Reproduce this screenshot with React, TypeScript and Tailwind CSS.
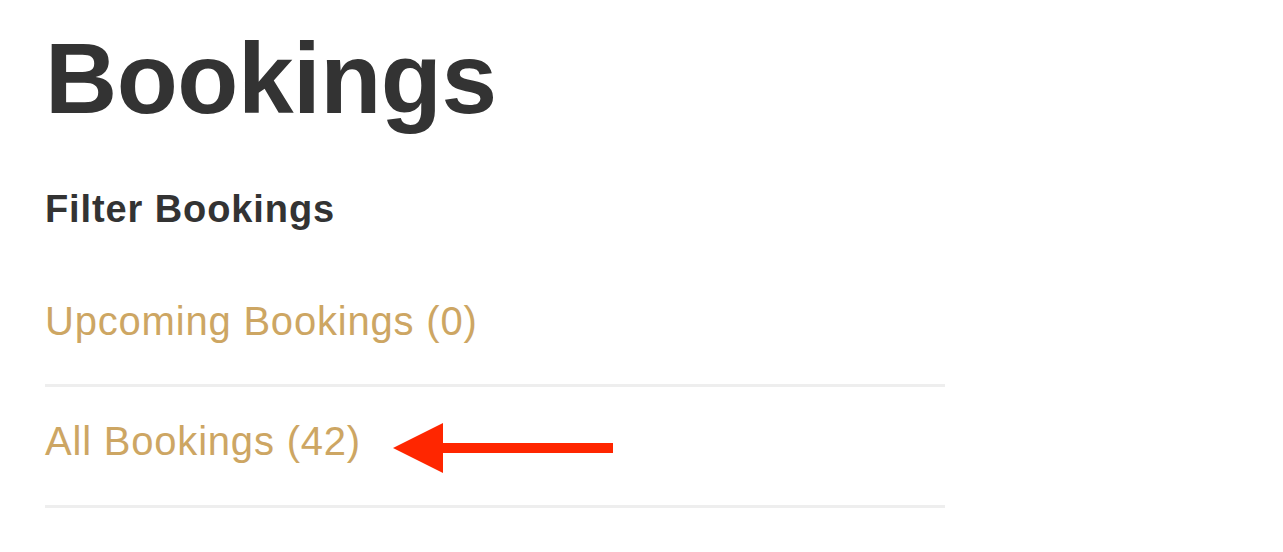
import React from "react";

export default function App() {
  return (
    <div className="relative min-h-screen bg-white font-['Liberation_Sans',Arial,sans-serif] text-[#333333]">
      <div className="pl-[45px]">
        <h1 className="pt-[28px] text-[100px] leading-[100px] font-bold tracking-[-0.5px]">Bookings</h1>
        <h3 className="mt-[61.5px] text-[38px] leading-[38px] font-bold tracking-[0.9px]">Filter Bookings</h3>
        <ul className="mt-[39px] w-[900px]">
          <li className="border-b-[3px] border-[#eeeeee] pt-[34px] pb-[43.5px]">
            <a className="block text-[40px] leading-[40px] tracking-[0.8px] text-[#cda663]">Upcoming Bookings (0)</a>
          </li>
          <li className="border-b-[3px] border-[#eeeeee] pt-[34px] pb-[43.5px]">
            <a className="block text-[40px] leading-[40px] tracking-[0.8px] text-[#cda663]">All Bookings (42)</a>
          </li>
        </ul>
      </div>
      <svg className="absolute left-[393px] top-[423px]" width="221" height="51" viewBox="0 0 221 51">
        <polygon points="0,25 50,0 50,50" fill="#ff2600" />
        <rect x="49" y="20" width="171" height="10" fill="#ff2600" />
      </svg>
    </div>
  );
}
